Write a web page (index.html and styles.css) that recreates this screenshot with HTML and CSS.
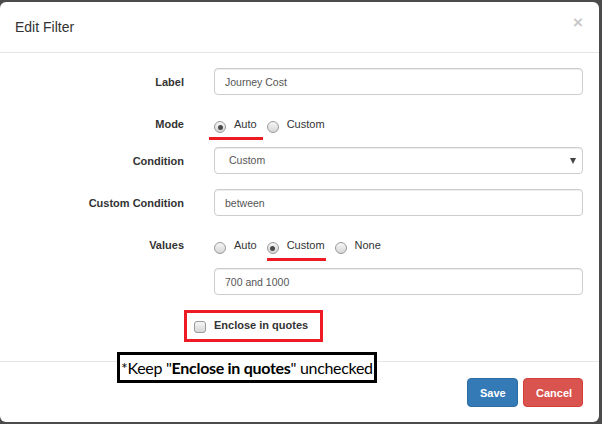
FILE: index.html
```html
<!DOCTYPE html>
<html>
<head>
<meta charset="utf-8">
<link rel="stylesheet" href="styles.css">
</head>
<body>
<div class="modal">
  <div class="modal-header">
    <h4 class="title">Edit Filter</h4>
    <span class="close">&times;</span>
  </div>
  <div class="modal-body">
    <div class="row r-input first">
      <label class="lbl">Label</label>
      <input class="fc" type="text" value="Journey Cost">
    </div>
    <div class="row r-radio">
      <label class="lbl">Mode</label>
      <div class="radios">
        <span class="opt mark mark-mode"><span class="radio checked"></span><span class="otext">Auto</span></span>
        <span class="opt"><span class="radio"></span><span class="otext">Custom</span></span>
      </div>
    </div>
    <div class="row r-input after-radio">
      <label class="lbl">Condition</label>
      <div class="fc select"><span>Custom</span><span class="arrow"></span></div>
    </div>
    <div class="row r-input">
      <label class="lbl">Custom Condition</label>
      <input class="fc" type="text" value="between">
    </div>
    <div class="row r-radio">
      <label class="lbl">Values</label>
      <div class="radios">
        <span class="opt"><span class="radio"></span><span class="otext">Auto</span></span>
        <span class="opt mark mark-values"><span class="radio checked"></span><span class="otext">Custom</span></span>
        <span class="opt"><span class="radio"></span><span class="otext">None</span></span>
      </div>
    </div>
    <div class="row r-input after-radio">
      <span class="lbl"></span>
      <input class="fc" type="text" value="700 and 1000">
    </div>
    <div class="row r-check">
      <span class="lbl"></span>
      <div class="checkwrap">
        <label class="check"><span class="box"></span><span class="ctext">Enclose in quotes</span></label>
      </div>
    </div>
  </div>
  <div class="modal-footer">
    <button class="btn save">Save</button>
    <button class="btn cancel">Cancel</button>
  </div>
  <div class="note">*Keep "<b>Enclose in quotes</b>" unchecked</div>
</div>
</body>
</html>
```

FILE: styles.css
```css
* { box-sizing: border-box; }
html, body { margin: 0; padding: 0; }
body {
  background: #4b4b4b;
  width: 602px;
  height: 424px;
  overflow: hidden;
  font-family: "Liberation Sans", Arial, sans-serif;
  color: #333;
}
.modal {
  position: relative;
  margin-top: 2px;
  width: 599px;
  height: 420px;
  background: #fff;
  border-radius: 6px;
  display: flow-root;
}
.modal-header {
  display: flex;
  align-items: center;
  justify-content: space-between;
  height: 51px;
  padding: 0 16px 0 15px;
  border-bottom: 1px solid #e5e5e5;
}
.title {
  margin: 0;
  font-size: 14px;
  font-weight: normal;
  color: #333;
  line-height: 20px;
}
.close {
  font-size: 17px;
  font-weight: bold;
  color: #c8c8c8;
  line-height: 20px;
  margin-top: -9px;
}
.modal-body {
  padding: 15px 16px 26px 15px;
  height: 308px;
}
.row {
  display: grid;
  grid-template-columns: 169px 1fr;
  column-gap: 30px;
  align-items: center;
}
.r-input { height: 27px; margin-top: 15px; }
.r-input.first { margin-top: 0; }
.r-input.after-radio { margin-top: 13px; }
.r-radio { height: 20px; margin-top: 19px; }
.r-check { height: 20px; margin-top: 20px; }
.lbl {
  text-align: right;
  font-size: 11px;
  font-weight: bold;
  line-height: 20px;
  color: #333;
}
.fc {
  display: block;
  width: 100%;
  height: 27px;
  margin: 0;
  padding: 0 10px;
  font-family: "Liberation Sans", Arial, sans-serif;
  font-size: 10.5px;
  line-height: 25px;
  color: #555;
  background: #fff;
  border: 1px solid #ccc;
  border-radius: 4px;
  box-shadow: inset 0 1px 1px rgba(0,0,0,.075);
  outline: none;
}
.select {
  display: flex;
  align-items: center;
  justify-content: space-between;
  padding: 0 6px 0 14px;
}
.arrow {
  width: 0;
  height: 0;
  border-left: 3.5px solid transparent;
  border-right: 3.5px solid transparent;
  border-top: 6px solid #444;
}
.radios {
  display: flex;
  align-items: center;
  height: 20px;
  gap: 10px;
}
.opt {
  position: relative;
  display: flex;
  align-items: center;
  height: 20px;
  gap: 8px;
}
.otext {
  font-size: 11px;
  line-height: 20px;
  color: #333;
}
.radio {
  width: 12px;
  height: 12px;
  margin-top: 6px;
  border-radius: 50%;
  border: 1px solid #9a9a9a;
  background: linear-gradient(#f6f6f6, #d6d6d6);
  position: relative;
}
.radio.checked::after {
  content: "";
  position: absolute;
  left: 2.5px;
  top: 2.5px;
  width: 5px;
  height: 5px;
  border-radius: 50%;
  background: #4a4a4a;
}
.mark::after {
  content: "";
  position: absolute;
  top: 23px;
  height: 3px;
  background: #ed1c24;
}
.mark-mode::after { left: -5px; width: 54px; }
.mark-values::after { left: 0; width: 59px; }
.checkwrap {
  display: flex;
  align-items: center;
  height: 20px;
}
.check {
  position: relative;
  display: flex;
  align-items: center;
  height: 20px;
  margin-left: -20px;
  gap: 8px;
}
.check::before {
  content: "";
  position: absolute;
  left: -10px;
  top: -5px;
  right: -15px;
  bottom: -7px;
  border: 3px solid #ed1c24;
}
.box {
  width: 12px;
  height: 12px;
  margin-top: 3px;
  border: 1px solid #9a9a9a;
  border-radius: 3px;
  background: linear-gradient(#f6f6f6, #d6d6d6);
}
.ctext {
  font-size: 11px;
  font-weight: bold;
  line-height: 20px;
  color: #333;
}
.modal-footer {
  display: flex;
  justify-content: flex-end;
  gap: 5px;
  padding: 16px 16px 14px 15px;
  border-top: 1px solid #e5e5e5;
}
.btn {
  height: 29px;
  padding: 0 12px;
  font-family: "Liberation Sans", Arial, sans-serif;
  font-size: 11px;
  font-weight: bold;
  color: #fff;
  border-radius: 4px;
  border: 1px solid transparent;
}
.save { background: #337ab7; border-color: #2e6da4; width: 51px; }
.cancel { background: #d9534f; border-color: #d43f3a; width: 60px; }
.note {
  position: absolute;
  left: 117px;
  top: 350px;
  width: 260px;
  height: 31px;
  border: 3px solid #000;
  background: #fff;
  font-family: Lato, "Open Sans", sans-serif;
  font-size: 16px;
  letter-spacing: -0.3px;
  line-height: 25px;
  color: #000;
  padding-left: 1px;
  white-space: nowrap;
}
.note b { font-weight: bold; }
```
